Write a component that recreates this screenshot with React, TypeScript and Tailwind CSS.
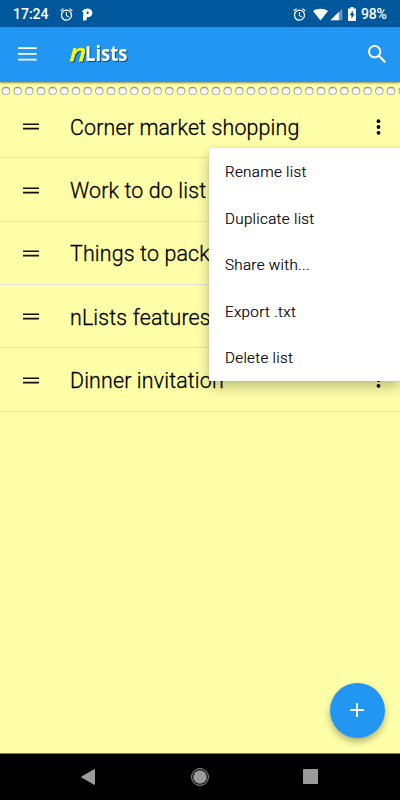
import React from 'react';

const rows = [
  'Corner market shopping',
  'Work to do list',
  'Things to pack',
  'nLists features',
  'Dinner invitation',
];
const actions = ['Rename list', 'Duplicate list', 'Share with...', 'Export .txt', 'Delete list'];

function Alarm() {
  return (
    <svg className="h-[15px] w-[15px]" viewBox="0 0 24 24" fill="white">
      <path d="M22 5.72l-4.6-3.86-1.29 1.53 4.6 3.86L22 5.72zM7.88 3.39L6.6 1.86 2 5.71l1.29 1.53 4.59-3.85zM12.5 8H11v6l4.75 2.85.75-1.23-4-2.37V8zM12 4c-4.97 0-9 4.03-9 9s4.02 9 9 9a9 9 0 0 0 0-18zm0 16c-3.87 0-7-3.13-7-7s3.13-7 7-7 7 3.13 7 7-3.13 7-7 7z" />
    </svg>
  );
}

function StatusBar() {
  return (
    <div className="flex h-[27px] shrink-0 items-center bg-[#00579b] pl-[13px] pr-[14px] pt-px text-[14px] font-medium text-white">
      <span className="w-[45.5px] leading-[26px]">17:24</span>
      <Alarm />
      <svg className="ml-[8px] h-[13px] w-[11px]" viewBox="0 0 11 13">
        <path fill="white" fillRule="evenodd" d="M0.2 3Q1.6 0.4 5.2 0.4C8.4 0.4 10.4 2.1 10.4 4.9C10.4 7.7 8 9.4 5 9.1L4.3 12.4H0.9L1.3 4.6Q0.2 4.2 0.2 3ZM4.9 3.4L4.5 6.1C6 6.3 6.8 5.7 6.8 4.7C6.8 3.8 6 3.3 4.9 3.4Z" />
      </svg>
      <div className="ml-auto flex items-center">
        <Alarm />
        <svg className="ml-[6px] h-[13px] w-[15px]" viewBox="0 0 15 13">
          <path fill="white" d="M0 3C4.3-.1 10.7-.1 15 3L7.5 12.5Z" />
        </svg>
        <svg className="ml-[2px] h-[13px] w-[13px]" viewBox="0 0 13 13">
          <path fill="#6699c2" d="M12.3.6V12.3H.5Z" />
          <path fill="white" d="M8.8 4.1V12.3H.5Z" />
        </svg>
        <svg className="ml-[5px] mr-[5px] h-[14px] w-[8px]" viewBox="0 0 8 14">
          <path fill="white" d="M2.4 0h3.2v1.4H8V14H0V1.4h2.4z" />
          <path fill="#00579b" d="M4.9 3.6L1.7 8.2h1.8v3.5l3-4.8H4.9z" />
        </svg>
        <span className="w-[25px] whitespace-nowrap leading-[26px] tracking-[-0.2px]">98%</span>
      </div>
    </div>
  );
}

function Header() {
  return (
    <header className="z-10 flex h-[54.5px] shrink-0 items-center bg-[#2196f3] pl-[18px] pr-[14.5px] shadow-[0_1px_2px_rgba(0,0,0,0.45)]">
      <svg className="h-[14px] w-[19px]" viewBox="0 0 19 14" fill="white">
        <path d="M0 .3h18.7v1.8H0zM0 6h18.7v1.8H0zM0 11.7h18.7v1.8H0z" />
      </svg>
      <svg className="ml-[31px] h-[28px] w-[64px] overflow-visible drop-shadow-[1px_1px_0.6px_rgba(0,0,0,0.5)]" viewBox="0 0 64 28">
        <text x="0" y="0" transform="translate(1.5 21.3) skewX(-8)" textLength="15.5" lengthAdjust="spacingAndGlyphs" fill="#ffff00" className="font-['Lato',sans-serif] text-[25px] font-normal italic" stroke="#ffff00" strokeWidth="0.8">n</text>
        <text x="17" y="21.4" textLength="42.5" lengthAdjust="spacingAndGlyphs" fill="white" className="font-['Open_Sans',sans-serif] text-[21.5px] font-bold">Lists</text>
      </svg>
      <svg className="ml-auto h-[18px] w-[18px]" viewBox="3 3 17.5 17.5" fill="white">
        <path d="M15.5 14h-.79l-.28-.27A6.47 6.47 0 0 0 16 9.5 6.5 6.5 0 1 0 9.5 16c1.61 0 3.09-.59 4.23-1.57l.27.28v.79l5 4.99L20.49 19l-4.99-5zm-6 0C7.01 14 5 11.99 5 9.5S7.01 5 9.5 5 14 7.01 14 9.5 11.99 14 9.5 14z" />
      </svg>
    </header>
  );
}

function Perforation() {
  return (
    <svg className="h-[13.5px] w-full shrink-0" viewBox="0 0 400 13.5">
      <defs>
        <linearGradient id="hole" x1="0" y1="0" x2="0" y2="1">
          <stop offset="0" stopColor="#c4c4c4" />
          <stop offset="0.4" stopColor="#fafafa" />
          <stop offset="1" stopColor="#ffffff" />
        </linearGradient>
        <linearGradient id="rim" x1="0" y1="0" x2="0" y2="1">
          <stop offset="0" stopColor="#888878" />
          <stop offset="0.5" stopColor="#a8a898" />
          <stop offset="1" stopColor="#a8a898" />
        </linearGradient>
      </defs>
      {Array.from({ length: 35 }, (_, i) => (
        <circle key={i} cx={6 + i * 11.667} cy="9" r="3.9" fill="url(#hole)" stroke="url(#rim)" strokeWidth="1" />
      ))}
    </svg>
  );
}

export default function App() {
  return (
    <div className="relative flex h-[800px] w-[400px] flex-col overflow-hidden bg-[#ffffa8] font-['Roboto',sans-serif]">
      <StatusBar />
      <Header />
      <Perforation />
      <main className="flex-1">
        {rows.map((name) => (
          <div key={name} className="flex h-[63.35px] items-center border-b border-[#dedede] pl-[23px] pr-[19px] pt-px">
            <svg className="h-[7px] w-[16px]" viewBox="0 0 16 7">
              <path fill="#111" d="M0 .4h16v1.7H0zM0 4.7h16v1.7H0z" />
            </svg>
            <span className="ml-[31px] whitespace-nowrap pt-[2px] text-[21.4px] font-light tracking-[0.15px] text-black [-webkit-text-stroke:0.3px_black]">{name}</span>
            <svg className="ml-auto h-[16px] w-[5px]" viewBox="0 0 5 16">
              <circle cx="2.5" cy="2.2" r="1.9" />
              <circle cx="2.5" cy="8" r="1.9" />
              <circle cx="2.5" cy="13.8" r="1.9" />
            </svg>
          </div>
        ))}
      </main>
      <nav className="flex h-[47px] shrink-0 items-center border-t border-[#7f7f54] bg-black pb-px">
        <svg className="ml-[81px] h-[16px] w-[14px]" viewBox="0 0 14 16">
          <path fill="#9b9b9b" d="M.5 7.5Q0 8 .5 8.5L13 15.7Q14 16 14 15V1Q14 0 13 .3Z" />
        </svg>
        <svg className="ml-[96px] h-[18px] w-[18px]" viewBox="0 0 18 18">
          <circle cx="9" cy="9" r="8.4" fill="none" stroke="#9b9b9b" />
          <circle cx="9" cy="9" r="6.8" fill="#9b9b9b" />
        </svg>
        <div className="ml-[94px] h-[15px] w-[15px] rounded-[1px] bg-[#9b9b9b]" />
      </nav>
      <div className="absolute left-[209.4px] top-[148px] w-[190.6px] rounded-[1.5px] bg-white shadow-[0_6px_14px_rgba(0,0,0,0.26),0_0_3px_rgba(0,0,0,0.08)]">
        {actions.map((label) => (
          <div key={label} className="flex h-[46.65px] items-center pl-[15.6px] pt-[2px] text-[15.2px] font-light tracking-[0.3px] text-black [-webkit-text-stroke:0.2px_black]">
            {label}
          </div>
        ))}
      </div>
      <button className="absolute left-[330px] top-[683px] flex h-[54.5px] w-[54.5px] items-center justify-center rounded-full bg-[#2196f3] shadow-[0_4px_7px_rgba(0,0,0,0.3)]">
        <svg className="h-[14px] w-[14px]" viewBox="0 0 14 14" fill="white">
          <path d="M6.1 0h1.8v6.1H14v1.8H7.9V14H6.1V7.9H0V6.1h6.1z" />
        </svg>
      </button>
    </div>
  );
}
